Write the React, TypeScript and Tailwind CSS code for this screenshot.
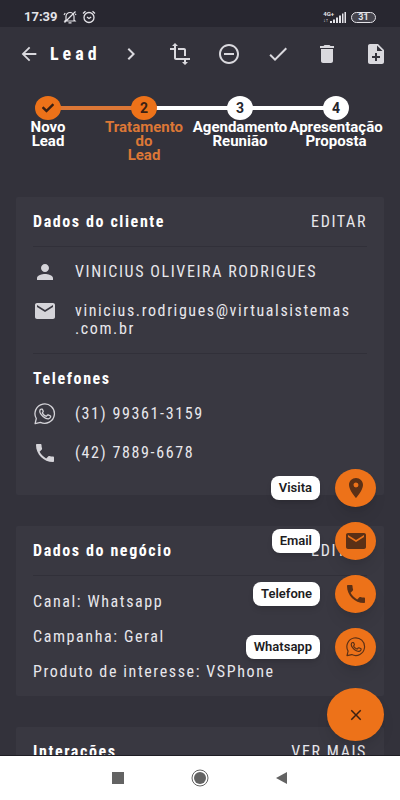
import React, { useState } from "react";
import { FaCheck } from "react-icons/fa";
import {
  MdArrowBack,
  MdCheck,
  MdChevronRight,
  MdClose,
  MdDelete,
  MdEmail,
  MdLocationOn,
  MdNoteAdd,
  MdPerson,
  MdPhone,
  MdRemoveCircleOutline,
  MdTransform,
} from "react-icons/md";

const steps = [
  { label: "Novo\nLead", status: "done" },
  { label: "Tratamento\ndo\nLead", status: "current" },
  { label: "Agendamento\nReunião", status: "todo" },
  { label: "Apresentação\nProposta", status: "todo" },
];

const WhatsappIcon = ({ className }: { className?: string }) => (
  <svg
    viewBox="0 0 24 24"
    fill="none"
    stroke="currentColor"
    strokeWidth="1.4"
    strokeLinejoin="round"
    className={className}
  >
    <path d="M1.2 22.400l1.300-5.500A10.600 10.600 0 1 1 7 21.100z" />
    <path d="M8.5 6.6h-.7c-.6.1-1.5 1-1.5 2.4 0 1.500 1 3 1.400 3.500 1.200 1.700 2.700 3.200 4.700 4 1.500.600 2.400.9 3.400.700 1-.2 2-.9 2.200-1.700.2-.7.2-1.200.1-1.300l-2.600-1.300c-.4-.1-.6 0-.8.2l-1 1.200c-.2.2-.4.2-.7.100-1.700-.7-3-1.900-3.800-3.400-.1-.3 0-.5.1-.600l.7-.900c.1-.3.1-.4 0-.700l-1-2.200z" />
  </svg>
);

const StatusBar = () => (
  <div className="flex h-[27px] shrink-0 items-center bg-[#282730] px-6 pt-[7px] font-[Roboto,sans-serif] text-[#e4e3e8]">
    <span className="text-[13px] leading-4 font-bold">17:39</span>
    <svg
      viewBox="0 0 14 14"
      className="ml-[5px] h-3.5 w-3.5"
      fill="none"
      stroke="currentColor"
      strokeWidth="1.2"
    >
      <path d="M3 10V6.500a4 4 0 0 1 8 0V10l1 1H2zM5.500 12.800h3M1.500 12.500l11-11M1 5l1.200-2M13 5l-.7-1.200" />
    </svg>
    <svg
      viewBox="0 0 14 14"
      className="ml-[5px] h-3.5 w-3.5"
      fill="none"
      stroke="currentColor"
      strokeWidth="1.3"
    >
      <circle cx="7" cy="7.500" r="5" />
      <path d="M5 7l2 1.500L9.200 7M1 3.500L3.500 1.200M13 3.500l-2.500-2.300" />
    </svg>
    <div className="ml-auto flex items-center">
      <div className="flex h-3 flex-col justify-between">
        <span className="text-[6px] leading-[6px] font-bold">4G+</span>
        <span className="text-[5px] leading-[5px]">↓↑</span>
      </div>
      <svg viewBox="0 0 16 12" className="-ml-1 h-3 w-4" fill="currentColor">
        <path d="M0 10h2v2H0zM3 8.500h2V12H3zM6 6.500h2V12H6zM9 4.500h2V12H9zM12 2.500h1.500V12H12zM14.500 1H16v11h-1.500z" />
      </svg>
      <span className="ml-[5px] flex h-[11px] w-[25px] items-center justify-center rounded-full border border-current bg-[#45444d] text-[9px] leading-[9px] font-bold">
        31
      </span>
    </div>
  </div>
);

const Stepper = () => (
  <ol className="mt-4 mr-4 grid h-[101px] shrink-0 grid-cols-4 font-[Roboto,sans-serif]">
    {steps.map((step, i) => (
      <li key={step.label} className="relative flex flex-col items-center">
        {i > 0 && (
          <span
            className={`absolute top-[10px] right-1/2 h-1 w-full ${
              i === 1 ? "bg-[#dc7736]" : "bg-white"
            }`}
          />
        )}
        <span
          className={`relative z-10 flex h-6 w-[26px] items-center justify-center rounded-[50%] text-sm font-bold ${
            step.status === "todo"
              ? "bg-white text-[#26252c]"
              : "bg-[#ed7219] text-[#3a2013]"
          }`}
        >
          {step.status === "done" ? <FaCheck className="h-3 w-3" /> : i + 1}
        </span>
        <span
          className={`text-center text-[15px] leading-[14px] font-bold whitespace-pre ${
            step.status === "current" ? "text-[#dc7736]" : "text-white"
          }`}
        >
          {step.label}
        </span>
      </li>
    ))}
  </ol>
);

const Card = ({
  title,
  action,
  children,
}: {
  title: string;
  action: string;
  children?: React.ReactNode;
}) => (
  <section className="rounded-xs bg-[#393841] px-[17px]">
    <header className="flex h-[50px] items-center justify-between border-b border-[#313039]">
      <h2 className="font-bold text-white">{title}</h2>
      <button type="button" className="tracking-widest">
        {action}
      </button>
    </header>
    {children}
  </section>
);

const InfoRow = ({
  icon,
  children,
}: {
  icon: React.ReactNode;
  children: React.ReactNode;
}) => (
  <div className="flex items-start gap-[18px]">
    <span className="flex h-6 w-6 shrink-0 items-center justify-center text-[26px] text-[#d5d4d9]">
      {icon}
    </span>
    <p className="py-[3px]">{children}</p>
  </div>
);

const FabAction = ({
  label,
  children,
}: {
  label: string;
  children: React.ReactNode;
}) => (
  <button type="button" className="mr-2 flex items-center gap-[15px]">
    <span className="rounded-lg bg-white px-2 py-1 text-[13px] leading-4 font-semibold text-[#1d1c22] shadow-md">
      {label}
    </span>
    <span className="flex h-[38px] w-[41px] items-center justify-center rounded-[50%] bg-[#ed7219] text-2xl text-[#5b3016] shadow-lg">
      {children}
    </span>
  </button>
);

export default function App() {
  const [open, setOpen] = useState(true);

  return (
    <div className="flex h-screen flex-col overflow-hidden bg-[#33323b] font-['Roboto_Condensed',Roboto,sans-serif] text-[#e8e7ec]">
      <StatusBar />

      <header className="flex h-[53px] shrink-0 items-center pr-3 pl-[18px]">
        <button
          type="button"
          aria-label="Voltar"
          className="text-[22px] text-[#dad9de]"
        >
          <MdArrowBack />
        </button>
        <h1 className="ml-[10px] text-lg font-bold tracking-[4px] text-white">
          Lead
        </h1>
        <nav className="ml-auto flex gap-[25px] text-2xl text-[#dad9de]">
          <button type="button" aria-label="Próximo">
            <MdChevronRight />
          </button>
          <button type="button" aria-label="Transformar">
            <MdTransform />
          </button>
          <button type="button" aria-label="Remover">
            <MdRemoveCircleOutline />
          </button>
          <button type="button" aria-label="Concluir">
            <MdCheck />
          </button>
          <button type="button" aria-label="Excluir">
            <MdDelete />
          </button>
          <button type="button" aria-label="Adicionar nota">
            <MdNoteAdd />
          </button>
        </nav>
      </header>

      <div className="relative flex min-h-0 flex-1 flex-col">
        <Stepper />

        <main className="flex min-h-0 flex-1 flex-col gap-[31px] overflow-hidden px-4 text-base leading-[18px] tracking-widest *:shrink-0">
          <Card title="Dados do cliente" action="EDITAR">
            <div className="flex flex-col gap-[15px] border-b border-[#313039] pt-[13px] pb-3">
              <InfoRow icon={<MdPerson />}>VINICIUS OLIVEIRA RODRIGUES</InfoRow>
              <InfoRow icon={<MdEmail />}>
                vinicius.rodrigues@virtualsistemas
                <wbr />
                .com.br
              </InfoRow>
            </div>
            <h3 className="pt-4 pb-[14px] font-bold text-white">Telefones</h3>
            <div className="flex flex-col gap-[15px] pb-[30px]">
              <InfoRow icon={<WhatsappIcon className="h-[22px] w-[22px]" />}>
                (31) 99361-3159
              </InfoRow>
              <InfoRow icon={<MdPhone />}>(42) 7889-6678</InfoRow>
            </div>
          </Card>

          <Card title="Dados do negócio" action="EDITAR">
            <div className="flex flex-col gap-[17px] pt-[17px] pb-[15px]">
              <p>Canal: Whatsapp</p>
              <p>Campanha: Geral</p>
              <p>Produto de interesse: VSPhone</p>
            </div>
          </Card>

          <Card title="Interações" action="VER MAIS" />
        </main>

        <div className="absolute right-4 bottom-[14px] flex flex-col items-end gap-[22px] font-[Roboto,sans-serif]">
          {open && (
            <div className="flex flex-col items-end gap-[15px]">
              <FabAction label="Visita">
                <MdLocationOn />
              </FabAction>
              <FabAction label="Email">
                <MdEmail />
              </FabAction>
              <FabAction label="Telefone">
                <MdPhone />
              </FabAction>
              <FabAction label="Whatsapp">
                <WhatsappIcon className="h-5 w-5" />
              </FabAction>
            </div>
          )}
          <button
            type="button"
            aria-label="Fechar"
            onClick={() => setOpen(!open)}
            className="flex h-[53px] w-[57px] items-center justify-center rounded-[50%] bg-[#ed7219] text-lg text-[#3a2013] shadow-lg"
          >
            <MdClose />
          </button>
        </div>
      </div>

      <nav className="flex h-[45px] shrink-0 items-center justify-center gap-16 border-t border-[#1e1d24] bg-white text-[#636363]">
        <button type="button" aria-label="Recentes">
          <svg viewBox="0 0 18 18" className="h-[18px] w-[18px]" fill="currentColor">
            <path d="M3 3h12v12H3z" />
          </svg>
        </button>
        <button type="button" aria-label="Início">
          <svg viewBox="0 0 18 18" className="h-[18px] w-[18px]">
            <circle cx="9" cy="9" r="8" fill="none" stroke="currentColor" />
            <circle cx="9" cy="9" r="6" fill="currentColor" />
          </svg>
        </button>
        <button type="button" aria-label="Voltar para a tela anterior">
          <svg viewBox="0 0 18 18" className="h-[18px] w-[18px]" fill="currentColor">
            <path d="M14 3v12L3 9z" />
          </svg>
        </button>
      </nav>
    </div>
  );
}
